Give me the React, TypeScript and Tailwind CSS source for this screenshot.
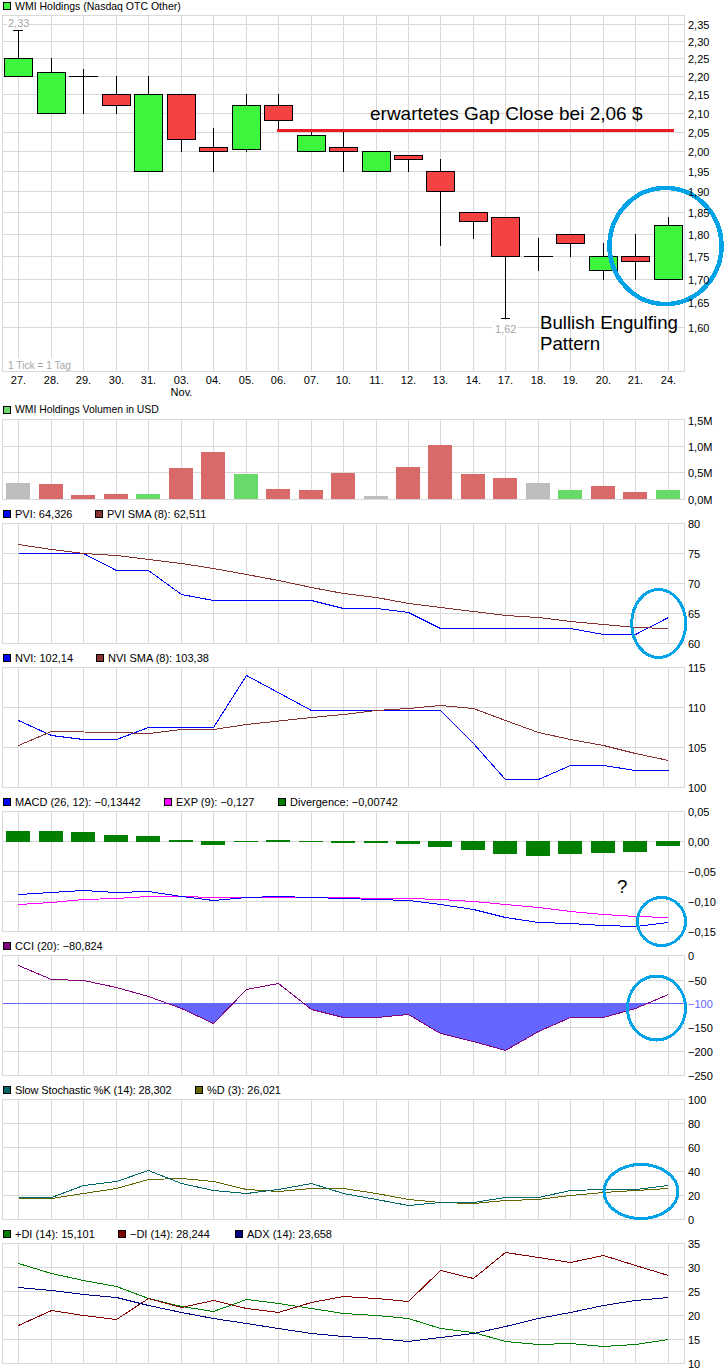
import type { ReactNode } from "react";

const xs = [18, 51, 83, 116, 148, 181, 213, 246, 278, 311, 343, 376, 408, 440, 473, 505, 538, 570, 603, 635, 668];
const days = ["27.", "28.", "29.", "30.", "31.", "03.", "04.", "05.", "06.", "07.", "10.", "11.", "12.", "13.", "14.", "17.", "18.", "19.", "20.", "21.", "24."];
const LEFT = 2.5;
const RIGHT = 684.5;
const BLUE = "#00a2e8";

// y values below were read from a 3x crop, hence the base + v / 3
const line = (base: number, vals: number[]) =>
  vals.map((v, i) => `${xs[i] + 0.5},${Math.floor(base + v / 3) + 0.5}`).join(" ");

type Tick = [number, string, string?];
type LegendItem = { color: string; label: string; width: string; text?: string };

function Legend({ items }: { items: LegendItem[] }) {
  return (
    <div className="flex h-3 items-center pl-[3px] text-[11px] leading-3 text-black">
      {items.map((item) => (
        <div key={item.label} className={`flex shrink-0 items-center gap-1 whitespace-nowrap ${item.width}`}>
          <span className="h-2 w-2 shrink-0 border border-black" style={{ backgroundColor: item.color }} />
          <span className={item.text}>{item.label}</span>
        </div>
      ))}
    </div>
  );
}

function AxisLabel({ y, children, color = "#000" }: { y: number; children: ReactNode; color?: string }) {
  return (
    <text x={688} y={y + 5} fill={color}>
      {children}
    </text>
  );
}

function Panel(props: {
  items: LegendItem[];
  top: number;
  height: number;
  plotTop: number;
  plotBottom: number;
  ticks: Tick[];
  children: ReactNode;
}) {
  const { items, top, height, plotTop, plotBottom, ticks, children } = props;
  return (
    <section>
      <Legend items={items} />
      <svg
        className="block overflow-visible text-[11px]"
        width={726}
        height={height}
        viewBox={`0 ${top} 726 ${height}`}
      >
        <g stroke="#d9d9d9" shapeRendering="crispEdges" fill="none">
          {xs.map((x) => (
            <line key={x} x1={x + 0.5} x2={x + 0.5} y1={plotTop} y2={plotBottom} />
          ))}
          {ticks.map(([y]) => (
            <line key={y} x1={LEFT} x2={RIGHT} y1={y + 0.5} y2={y + 0.5} />
          ))}
          <rect x={LEFT} y={plotTop} width={RIGHT - LEFT} height={plotBottom - plotTop} />
        </g>
        {children}
        {ticks.map(([y, label, color]) => (
          <AxisLabel key={label} y={y} color={color}>
            {label}
          </AxisLabel>
        ))}
      </svg>
    </section>
  );
}

function Curve({ points, color }: { points: string; color: string }) {
  return <polyline points={points} fill="none" stroke={color} shapeRendering="crispEdges" />;
}

function Ring({ cx, cy, rx, ry, width = 3 }: { cx: number; cy: number; rx: number; ry: number; width?: number }) {
  return <ellipse cx={cx} cy={cy} rx={rx} ry={ry} fill="none" stroke={BLUE} strokeWidth={width} shapeRendering="crispEdges" />;
}

// high, body top, body bottom, low, colour (null = doji)
const candles: [number, number, number, number, string | null][] = [
  [30, 58, 76, 76, "g"],
  [58, 72, 113, 113, "g"],
  [69, 76, 76, 113, null],
  [76, 94, 105, 113, "r"],
  [76, 94, 171, 171, "g"],
  [94, 94, 139, 151, "r"],
  [128, 147, 151, 171, "r"],
  [94, 105, 149, 151, "g"],
  [94, 105, 120, 131, "r"],
  [131, 135, 151, 151, "g"],
  [131, 147, 151, 171, "r"],
  [151, 151, 171, 171, "g"],
  [155, 155, 159, 171, "r"],
  [159, 171, 191, 245, "r"],
  [212, 212, 221, 238, "r"],
  [217, 217, 256, 318, "r"],
  [238, 256, 256, 270, null],
  [234, 234, 243, 256, "r"],
  [243, 256, 270, 279, "g"],
  [234, 256, 261, 279, "r"],
  [217, 225, 279, 279, "g"],
];

const volume: [number, string][] = [
  [483, "n"], [484, "r"], [495, "r"], [494, "r"], [494, "g"], [468, "r"], [452, "r"],
  [474, "g"], [489, "r"], [490, "r"], [473, "r"], [496, "n"], [467, "r"], [445, "r"],
  [474, "r"], [478, "r"], [483, "n"], [490, "g"], [486, "r"], [492, "r"], [490, "g"],
];
const volumeColors: Record<string, string> = { r: "#da6a6a", g: "#69da69", n: "#bebebe" };

const divergence: [number, number][] = [
  [831, 842], [831, 842], [832, 842], [835, 842], [836, 842], [840, 842], [841, 845],
  [841, 842], [840, 842], [841, 842], [841, 843], [841, 843], [841, 844], [841, 847],
  [841, 850], [841, 854], [841, 856], [841, 854], [841, 853], [841, 852], [841, 846],
];

const cci = [526, 568, 571, 592, 619, 655, 700, 598, 580, 658, 682, 682, 673, 730, 754, 781, 724, 682, 682, 655, 613];

export default function App() {
  return (
    <div className="h-[1372px] w-[726px] overflow-hidden bg-white font-['Liberation_Sans',Arial,sans-serif]">
      <Panel
        items={[{ color: "#3df53d", label: "WMI Holdings (Nasdaq OTC Other)", width: "w-[300px]", text: "text-[10.5px]" }]}
        top={12}
        height={392}
        plotTop={15.5}
        plotBottom={371.5}
        ticks={[
          [24, "2,35"], [41, "2,30"], [58, "2,25"], [76, "2,20"], [94, "2,15"], [113, "2,10"], [132, "2,05"], [151, "2,00"],
          [171, "1,95"], [191, "1,90"], [212, "1,85"], [234, "1,80"], [256, "1,75"], [279, "1,70"], [302, "1,65"], [327, "1,60"],
        ]}
      >
        <rect x={7} y={18} width={22} height={12} fill="#fff" />
        <text x={8} y={27} fill="#a6a6a6">2,33</text>
        <rect x={492} y={320} width={26} height={15} fill="#fff" />
        <text x={495} y={333} fill="#a6a6a6">1,62</text>
        <rect x={6} y={358} width={64} height={13} fill="#fff" />
        <text x={8} y={369} fontSize={10.2} fill="#a6a6a6">1 Tick = 1 Tag</text>
        <g shapeRendering="crispEdges">
          {candles.map(([high, top, bottom, low, kind], i) => {
            const x = xs[i];
            return (
              <g key={x}>
                <line x1={x + 0.5} x2={x + 0.5} y1={high} y2={low + 1} stroke="#000" />
                {kind ? (
                  <rect x={x - 13.5} y={top + 0.5} width={28} height={bottom - top} fill={kind === "g" ? "#3df53d" : "#f44141"} stroke="#000" />
                ) : (
                  <line x1={x - 14} x2={x + 15} y1={top + 0.5} y2={top + 0.5} stroke="#000" />
                )}
              </g>
            );
          })}
          <line x1={13} x2={23} y1={30.5} y2={30.5} stroke="#000" />
          <line x1={501} x2={510} y1={318.5} y2={318.5} stroke="#000" />
          <rect x={277} y={129} width={397} height={3} fill="#ed1c24" />
        </g>
        <Ring cx={665.5} cy={246} rx={56} ry={58} width={4.5} />
        {xs.map((x, i) => (
          <text key={x} x={x + 0.5} y={384} textAnchor="middle" fill="#000">{days[i]}</text>
        ))}
        <text x={181.5} y={396} textAnchor="middle" fill="#000">Nov.</text>
        <text x={370} y={120} fontSize={19} fill="#000">erwartetes Gap Close bei 2,06 $</text>
        <text x={540} y={329} fontSize={18.67} fill="#000">Bullish Engulfing</text>
        <text x={540} y={350} fontSize={18.67} fill="#000">Pattern</text>
      </Panel>

      <Panel
        items={[{ color: "#69da69", label: "WMI Holdings Volumen in USD", width: "w-[300px]", text: "text-[10.4px]" }]}
        top={416}
        height={92}
        plotTop={419.5}
        plotBottom={499.5}
        ticks={[[446, "1,0M"], [472, "0,5M"]]}
      >
        <g shapeRendering="crispEdges">
          {volume.map(([top, kind], i) => (
            <rect key={xs[i]} x={xs[i] - 12} y={top} width={24} height={499 - top} fill={volumeColors[kind]} />
          ))}
        </g>
        <AxisLabel y={420}>1,5M</AxisLabel>
        <AxisLabel y={499}>0,0M</AxisLabel>
      </Panel>

      <Panel
        items={[
          { color: "#0000ff", label: "PVI: 64,326", width: "w-[92px]" },
          { color: "#873333", label: "PVI SMA (8): 62,511", width: "w-[200px]" },
        ]}
        top={520}
        height={132}
        plotTop={523.5}
        plotBottom={643.5}
        ticks={[[553, "75"], [583, "70"], [613, "65"]]}
      >
        <Curve color="#0000ff" points="18.5,553.5 83.5,553.5 116.5,570.5 148.5,570.5 181.5,594.5 213.5,600.5 311.5,600.5 343.5,608.5 376.5,608.5 408.5,612.5 440.5,628.5 570.5,628.5 603.5,634.5 635.5,634.5 668.5,617.5" />
        <Curve color="#873333" points="18.5,544.5 51.5,549.5 83.5,553.5 116.5,555.5 148.5,559.5 181.5,563.5 213.5,568.5 246.5,574.5 278.5,580.5 311.5,587.5 343.5,593.5 376.5,597.5 408.5,603.5 440.5,607.5 473.5,611.5 505.5,615.5 538.5,617.5 570.5,621.5 603.5,624.5 635.5,627.5 668.5,628.5" />
        <Ring cx={658.7} cy={623.5} rx={27} ry={34} />
        <AxisLabel y={523}>80</AxisLabel>
        <AxisLabel y={643}>60</AxisLabel>
      </Panel>

      <Panel
        items={[
          { color: "#0000ff", label: "NVI: 102,14", width: "w-[93px]" },
          { color: "#873333", label: "NVI SMA (8): 103,38", width: "w-[200px]" },
        ]}
        top={664}
        height={132}
        plotTop={667.5}
        plotBottom={787.5}
        ticks={[[707, "110"], [747, "105"]]}
      >
        <Curve color="#0000ff" points="18.5,720.5 51.5,735.5 83.5,739.5 116.5,739.5 148.5,727.5 213.5,727.5 246.5,675.5 311.5,710.5 440.5,710.5 473.5,743.5 505.5,779.5 538.5,779.5 570.5,765.5 603.5,765.5 635.5,770.5 668.5,770.5" />
        <Curve color="#873333" points="18.5,745.5 51.5,731.5 116.5,732.5 148.5,733.5 181.5,729.5 213.5,729.5 246.5,724.5 311.5,717.5 343.5,714.5 376.5,710.5 408.5,708.5 440.5,705.5 473.5,708.5 505.5,720.5 538.5,732.5 570.5,739.5 603.5,745.5 635.5,753.5 668.5,760.5" />
        <AxisLabel y={667}>115</AxisLabel>
        <AxisLabel y={787}>100</AxisLabel>
      </Panel>

      <Panel
        items={[
          { color: "#0000ff", label: "MACD (26, 12): −0,13442", width: "w-[161px]" },
          { color: "#ff00ff", label: "EXP (9): −0,127", width: "w-[114px]" },
          { color: "#008000", label: "Divergence: −0,00742", width: "w-[200px]" },
        ]}
        top={808}
        height={132}
        plotTop={811.5}
        plotBottom={931.5}
        ticks={[[841, "0,00"], [871, "−0,05"], [901, "−0,10"]]}
      >
        <g shapeRendering="crispEdges">
          {divergence.map(([top, bottom], i) => (
            <rect key={xs[i]} x={xs[i] - 12} y={top} width={24} height={bottom - top} fill="#008000" />
          ))}
        </g>
        <Curve color="#ff00ff" points={line(790, [343, 337, 328, 325, 319, 319, 322, 322, 322, 322, 322, 325, 325, 328, 334, 343, 352, 364, 373, 379, 382])} />
        <Curve color="#0000ff" points={line(790, [313, 307, 301, 307, 304, 319, 331, 322, 319, 322, 325, 327, 331, 343, 358, 382, 397, 400, 406, 409, 397])} />
        <Ring cx={661.5} cy={921.5} rx={24} ry={24} />
        <text x={617} y={893} fontSize={18.67} fill="#000">?</text>
        <AxisLabel y={811}>0,05</AxisLabel>
        <AxisLabel y={931}>−0,15</AxisLabel>
      </Panel>

      <Panel
        items={[{ color: "#800080", label: "CCI (20): −80,824", width: "w-[300px]" }]}
        top={952}
        height={132}
        plotTop={955.5}
        plotBottom={1075.5}
        ticks={[[980, "−50"], [1027, "−150"], [1051, "−200"]]}
      >
        <defs>
          <clipPath id="below-100">
            <rect x={0} y={1003} width={726} height={72} />
          </clipPath>
        </defs>
        <polygon
          clipPath="url(#below-100)"
          fill="#6666ff"
          shapeRendering="crispEdges"
          points={`18,1003 ${line(790, cci)} 668,1003`}
        />
        <line x1={LEFT} x2={RIGHT} y1={1003.5} y2={1003.5} stroke="#6666ff" shapeRendering="crispEdges" />
        <Curve color="#800080" points={line(790, cci)} />
        <Ring cx={656.5} cy={1008} rx={29} ry={32} />
        <AxisLabel y={955}>0</AxisLabel>
        <AxisLabel y={1003} color="#6666ff">−100</AxisLabel>
        <AxisLabel y={1075}>−250</AxisLabel>
      </Panel>

      <Panel
        items={[
          { color: "#006666", label: "Slow Stochastic %K (14): 28,302", width: "w-[192px]", text: "tracking-[-0.12px]" },
          { color: "#666600", label: "%D (3): 26,021", width: "w-[200px]" },
        ]}
        top={1096}
        height={132}
        plotTop={1099.5}
        plotBottom={1219.5}
        ticks={[[1123, "80"], [1147, "60"], [1171, "40"], [1195, "20"]]}
      >
        <Curve color="#666600" points={line(1080, [355, 355, 340, 325, 298, 295, 304, 328, 334, 325, 325, 340, 358, 367, 370, 361, 358, 346, 337, 331, 325])} />
        <Curve color="#006666" points={line(1080, [352, 352, 316, 304, 271, 310, 331, 340, 328, 310, 340, 358, 376, 367, 367, 352, 352, 331, 328, 328, 316])} />
        <Ring cx={641} cy={1191.5} rx={37} ry={27} />
        <AxisLabel y={1099}>100</AxisLabel>
        <AxisLabel y={1219}>0</AxisLabel>
      </Panel>

      <Panel
        items={[
          { color: "#008000", label: "+DI (14): 15,101", width: "w-[115px]" },
          { color: "#800000", label: "−DI (14): 28,244", width: "w-[117px]" },
          { color: "#000080", label: "ADX (14): 23,658", width: "w-[200px]" },
        ]}
        top={1240}
        height={132}
        plotTop={1243.5}
        plotBottom={1363.5}
        ticks={[[1267, "30"], [1291, "25"], [1315, "20"], [1339, "15"]]}
      >
        <Curve color="#008000" points={line(1080, [550, 580, 601, 619, 655, 679, 694, 658, 670, 685, 700, 706, 715, 745, 757, 784, 793, 790, 799, 793, 778])} />
        <Curve color="#800000" points={line(1080, [737, 691, 706, 718, 655, 682, 661, 685, 697, 667, 649, 655, 664, 571, 595, 517, 532, 547, 526, 556, 586])} />
        <Curve color="#000080" points={line(1080, [622, 631, 643, 652, 676, 697, 715, 730, 745, 760, 769, 775, 784, 772, 760, 739, 715, 697, 676, 661, 652])} />
        <AxisLabel y={1243}>35</AxisLabel>
        <AxisLabel y={1363}>10</AxisLabel>
      </Panel>
    </div>
  );
}
